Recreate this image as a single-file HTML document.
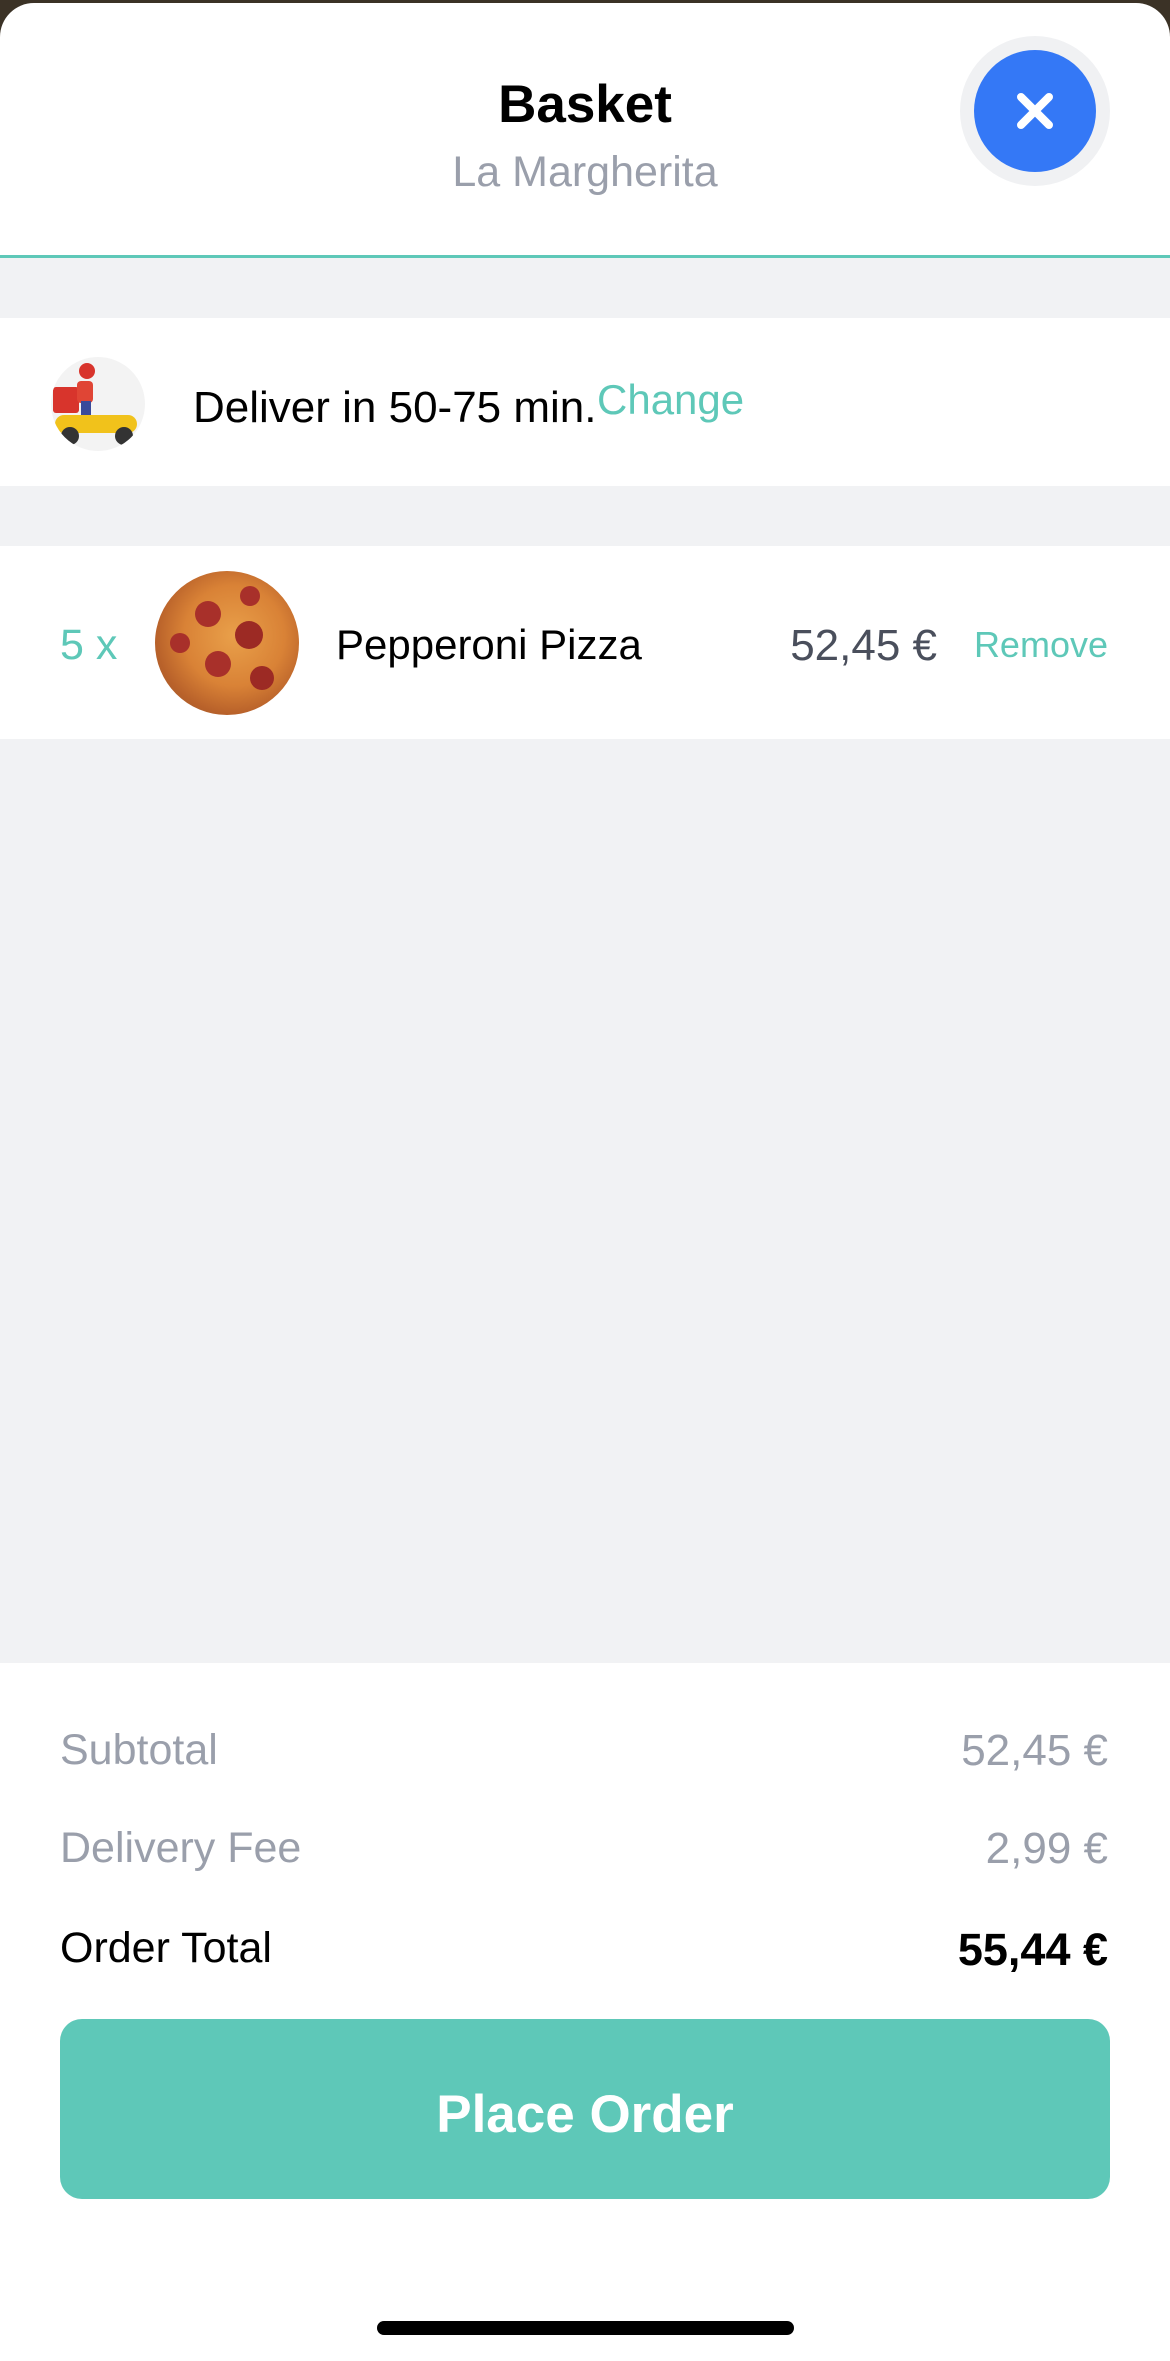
<!DOCTYPE html>
<html><head><meta charset="utf-8"><style>
*{margin:0;padding:0;box-sizing:border-box}
html,body{width:1170px;height:2361px;overflow:hidden;background:#3b3226;font-family:"Liberation Sans",sans-serif}
.sheet{position:absolute;left:0;top:3px;width:1170px;height:2358px;background:#fff;border-radius:34px 34px 0 0;overflow:hidden}
.abs{position:absolute}
.gray{background:#f1f2f4}
.t{position:absolute;white-space:nowrap;line-height:1}
</style></head><body>
<div class="sheet">
  <div class="t" style="left:0;width:1170px;text-align:center;top:75px;font-size:53px;font-weight:bold;color:#000">Basket</div>
  <div class="t" style="left:0;width:1170px;text-align:center;top:148px;font-size:43px;color:#9a9fab">La Margherita</div>
  <div class="abs" style="left:960px;top:33px;width:150px;height:150px;border-radius:50%;background:#f0f1f3"></div>
  <div class="abs" style="left:974px;top:47px;width:122px;height:122px;border-radius:50%;background:#3478f6"></div>
  <svg class="abs" style="left:1010px;top:83px" width="50" height="50" viewBox="0 0 50 50"><path d="M11 11L39 39M39 11L11 39" stroke="#fff" stroke-width="8" stroke-linecap="round"/></svg>
  <div class="abs" style="left:0;top:252px;width:1170px;height:3px;background:#5ec8b8"></div>
  <div class="abs gray" style="left:0;top:255px;width:1170px;height:60px"></div>
  <div class="abs" style="left:51px;top:354px;width:94px;height:94px;border-radius:50%;background:#f3f3f3;overflow:hidden">
    <div class="abs" style="left:2px;top:30px;width:26px;height:26px;background:#d8342c;border-radius:3px"></div>
    <div class="abs" style="left:28px;top:6px;width:16px;height:16px;background:#d8342c;border-radius:50%"></div>
    <div class="abs" style="left:26px;top:24px;width:16px;height:22px;background:#e04535;border-radius:4px"></div>
    <div class="abs" style="left:30px;top:44px;width:10px;height:20px;background:#3a4a9a"></div>
    <div class="abs" style="left:4px;top:58px;width:82px;height:18px;background:#f1c21b;border-radius:10px"></div>
    <div class="abs" style="left:10px;top:70px;width:18px;height:18px;background:#333;border-radius:50%"></div>
    <div class="abs" style="left:64px;top:70px;width:18px;height:18px;background:#333;border-radius:50%"></div>
  </div>
  <div class="t" style="left:193px;top:383px;font-size:44px;color:#000">Deliver in 50-75 min.</div>
  <div class="t" style="left:597px;top:376px;font-size:42px;color:#5ec8b8">Change</div>
  <div class="abs gray" style="left:0;top:483px;width:1170px;height:60px"></div>
  <div class="t" style="left:60px;top:621px;font-size:43px;color:#5ec8b8">5 x</div>
  <div class="abs" style="left:155px;top:568px;width:144px;height:144px;border-radius:50%;overflow:hidden;background:radial-gradient(circle at 55% 45%,#e9a04a 0,#d98236 45%,#b8612a 70%,#8a5a34 100%)">
    <div class="abs" style="left:40px;top:30px;width:26px;height:26px;border-radius:50%;background:#a8302a"></div>
    <div class="abs" style="left:80px;top:50px;width:28px;height:28px;border-radius:50%;background:#9c2a24"></div>
    <div class="abs" style="left:50px;top:80px;width:26px;height:26px;border-radius:50%;background:#a8302a"></div>
    <div class="abs" style="left:95px;top:95px;width:24px;height:24px;border-radius:50%;background:#9c2a24"></div>
    <div class="abs" style="left:15px;top:62px;width:20px;height:20px;border-radius:50%;background:#a8302a"></div>
    <div class="abs" style="left:85px;top:15px;width:20px;height:20px;border-radius:50%;background:#a8302a"></div>
  </div>
  <div class="t" style="left:336px;top:621px;font-size:42px;color:#000">Pepperoni Pizza</div>
  <div class="t" style="right:233px;top:621px;font-size:44px;color:#4a4f5c">52,45 €</div>
  <div class="t" style="right:62px;top:624px;font-size:36px;color:#5ec8b8">Remove</div>
  <div class="abs gray" style="left:0;top:736px;width:1170px;height:924px"></div>
  <div class="t" style="left:60px;top:1726px;font-size:43px;color:#9a9fab">Subtotal</div>
  <div class="t" style="right:62px;top:1726px;font-size:44px;color:#9a9fab">52,45 €</div>
  <div class="t" style="left:60px;top:1824px;font-size:43px;color:#9a9fab">Delivery Fee</div>
  <div class="t" style="right:62px;top:1824px;font-size:44px;color:#9a9fab">2,99 €</div>
  <div class="t" style="left:60px;top:1924px;font-size:43px;color:#000">Order Total</div>
  <div class="t" style="right:62px;top:1924px;font-size:45px;font-weight:bold;color:#000">55,44 €</div>
  <div class="abs" style="left:60px;top:2016px;width:1050px;height:180px;border-radius:22px;background:#5ec8b8"></div>
  <div class="t" style="left:60px;width:1050px;text-align:center;top:2085px;font-size:53px;font-weight:bold;color:#fff">Place Order</div>
  <div class="abs" style="left:377px;top:2318px;width:417px;height:14px;border-radius:7px;background:#000"></div>
</div>
</body></html>
